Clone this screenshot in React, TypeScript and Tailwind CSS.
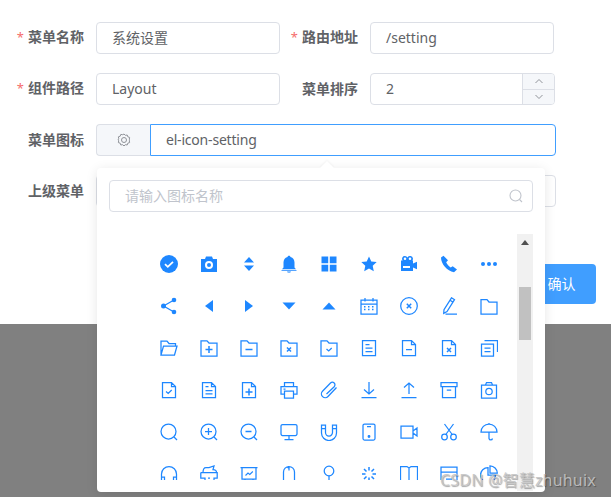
import type { ReactNode } from "react";

const Fill = ({ children }: { children: ReactNode }) => (
  <g fill="currentColor" stroke="none">
    {children}
  </g>
);

// el-icon-* in the order they are listed in the picker
const ICONS: ReactNode[] = [
  // row 1
  <Fill><circle cx="9" cy="9" r="9" /><path d="M5 9.2l2.8 2.6L13 6.8" fill="none" stroke="#fff" strokeWidth="1.8" /></Fill>,
  <Fill><path fillRule="evenodd" d="M1 4h4l1-2.5h6L13 4h4v13H1zM9 6a4 4 0 100 8 4 4 0 000-8zm0 2a2 2 0 110 4 2 2 0 010-4z" /></Fill>,
  <Fill><path d="M9 2l5 5.5H4zM9 16l-5-5.500h10z" /></Fill>,
  <Fill><path d="M9 .8c.8 0 1.300.5 1.500 1.200 2.700.7 4 3 4 5.500v5l1.500 1.800H2l1.500-1.800v-5c0-2.500 1.300-4.800 4-5.500C7.700 1.300 8.200.8 9 .8zM1.500 15h15v.8h-15zM7 16.500h4c-.3.800-1 1.200-2 1.200s-1.700-.4-2-1.200z" /></Fill>,
  <Fill><path d="M1.500 1.500h6.700v6.700H1.500zM9.800 1.500h6.700v6.700H9.800zM1.500 9.800h6.700v6.700H1.500zM9.800 9.800h6.700v6.700H9.800z" /></Fill>,
  <Fill><path d="M9 1.500l2.300 5 5.400.6-4 3.700 1.100 5.400L9 13.500l-4.800 2.700 1.100-5.400-4-3.700 5.400-.6z" /></Fill>,
  <Fill><path fillRule="evenodd" d="M5 1a2.800 2.800 0 012.500 1.500A3 3 0 0113 3.500c0 .9-.3 1.500-.8 2H13v3l4-1.800v7.600l-4-1.800V16H1V5.500h1.600A2.800 2.800 0 015 1zm0 1.500a1.300 1.300 0 100 2.600 1.300 1.300 0 000-2.600zm5 0a1.300 1.300 0 100 2.600 1.300 1.300 0 000-2.600zM3 11v2h7v-2z" /></Fill>,
  <Fill><path d="M3.500 .8L1 2.500C1 9 7 16 14 17.300l3-2.800-4.300-3.200-2 1.300C9 11.500 7 9.300 6.200 7.300l1.800-2z" /></Fill>,
  <Fill><circle cx="3" cy="9" r="2" /><circle cx="9" cy="9" r="2" /><circle cx="15" cy="9" r="2" /></Fill>,
  // row 2
  <Fill><circle cx="3.500" cy="9" r="2.500" /><circle cx="14" cy="3" r="2.300" /><circle cx="14" cy="15" r="2.300" /><path d="M3.500 9L14 3M3.500 9L14 15" stroke="currentColor" strokeWidth="1.300" /></Fill>,
  <Fill><path d="M13 3v12L5 9z" /></Fill>,
  <Fill><path d="M5 3v12L13 9z" /></Fill>,
  <Fill><path d="M2.500 5.500h13L9 12.500z" /></Fill>,
  <Fill><path d="M2.500 12.500h13L9 5.500z" /></Fill>,
  <><path d="M1 3h16v14H1zM1 7h16M5 1v3.500M13 1v3.500" /><path d="M4 9.700h1.500M8 9.700h1.500M12 9.700h1.500M4 12.500h1.500M8 12.500h1.500M12 12.500h1.500" strokeWidth="1.500" /></>,
  <><circle cx="9" cy="9" r="8.300" /><path d="M6.800 6.800l4.400 4.400M11.200 6.800l-4.400 4.400" strokeWidth="1.500" /></>,
  <path d="M11.500 .8l3 1.800-7.500 11.900-3.300 1.800.3-3.700zM10 3.300l3 1.800M5.500 17H17" />,
  <path d="M1 2.500h6l2 2.500h8v12H1z" />,
  // row 3
  <path d="M1 16V2h6l2 2.500h6.500V7M1 16l2.500-9H17l-2.500 9z" />,
  <><path d="M1 1.800h6l2 2.200h8v13H1z" /><path d="M5.500 10.500h7M9 7v7" strokeWidth="1.500" /></>,
  <><path d="M1 1.800h6l2 2.200h8v13H1z" /><path d="M5.500 10.500h7" strokeWidth="1.500" /></>,
  <><path d="M1 1.800h6l2 2.200h8v13H1z" /><path d="M7 8.500l4 4M11 8.500l-4 4" strokeWidth="1.500" /></>,
  <><path d="M1 1.800h6l2 2.200h8v13H1z" /><path d="M6.500 10l2.200 2 3-3" /></>,
  <path d="M2.500 1.500h13v15h-13zM5.500 5.500h4M5.500 9h7M5.500 12.500h7" />,
  <path d="M2.500 1.500h9l4 4v11h-13zM11.500 1.500v4h4M6 10.500h6" />,
  <><path d="M2.500 1.500h9l4 4v11h-13zM11.500 1.500v4h4" /><path d="M7 9l4 4M11 9l-4 4" strokeWidth="1.500" /></>,
  <path d="M1.500 5h12v12h-12zM4.500 1.500h13V13M4.500 9h6M4.500 12.500h6" />,
  // row 4
  <path d="M2.500 1.500h9l4 4v11h-13zM11.500 1.500v4h4M6 10.500l2.200 2 3.500-3.500" />,
  <path d="M2.500 1.500h9l4 4v11h-13zM11.500 1.500v4h4M5.500 5.500h3M5.500 9.500h7M5.500 12.800h7" />,
  <><path d="M2.500 1.500h9l4 4v11h-13zM11.500 1.500v4h4" /><path d="M5.500 11h7M9 7.500v7" strokeWidth="1.500" /></>,
  <path d="M4.500 5.500V1.500h9v4M4.500 13H1V5.500h16V13h-3.500M4.500 10h9v7h-9zM3.500 8h2" />,
  <path d="M16.500 6.500L8 15.500a3.800 3.800 0 01-5.500-5.300L10.500 2a2.600 2.600 0 013.700 3.700L6.500 13" />,
  <path d="M1.500 16.500h15M9 1v12M4 8.500l5 4.500 5-4.500" />,
  <path d="M1.500 16.500h15M9 13V2M4 6.500L9 2l5 4.500" />,
  <path d="M1 1.500h16v4H1zM2.500 5.500v11h13v-11M6.800 9h4.400" />,
  <><path d="M1.500 4h15v13h-15zM5.500 4l1-2.500h5l1 2.500" /><circle cx="9" cy="10.500" r="3.200" /></>,
  // row 5
  <><circle cx="8.500" cy="8.500" r="7.500" /><path d="M14 14l3 3" /></>,
  <><circle cx="8.500" cy="8.500" r="7.500" /><path d="M14 14l3 3M5 8.500h7M8.500 5v7" /></>,
  <><circle cx="8.500" cy="8.500" r="7.500" /><path d="M14 14l3 3M5.500 8.500h6" strokeWidth="1.300" /></>,
  <path d="M2.500 1.500h13a1.500 1.500 0 011.500 1.500v8a1.500 1.500 0 01-1.500 1.500h-13A1.500 1.500 0 011 11V3a1.500 1.500 0 011.500-1.500zM9 12.500v4M4.500 16.500h9" />,
  <path d="M1.500 2h4v7.500a3.500 3.500 0 007 0V2h4v8a7.500 7.500 0 01-15 0zM1.500 5.500h4M12.500 5.500h4" />,
  <><path d="M4.500 1h9a1.500 1.500 0 011.500 1.500v13a1.500 1.500 0 01-1.500 1.500h-9A1.500 1.500 0 013 15.500v-13A1.500 1.500 0 014.500 1zM7 3.500h4" /><circle cx="9" cy="13.500" r=".8" fill="currentColor" /></>,
  <path d="M1 3h12v12H1zM13 8l4-3v8l-4-3" />,
  <><circle cx="4.500" cy="14" r="2.800" /><circle cx="13.500" cy="14" r="2.800" /><path d="M5.800 11.500L13.500 1M12.200 11.500L4.500 1" /></>,
  <path d="M1 9a8 8 0 0116 0zM9 1V0M9 9v6.500a1.800 1.800 0 003.500 0" />,
  // row 6
  <path d="M1.500 18V9a7.500 7.500 0 0115 0v9M1.500 12h3v6M16.500 12h-3v6" />,
  <path d="M3 7.500c0-2.500 1-5 3-5h3l5-1.500-1 3.500c2 0 3.500 1 3.500 3M.8 7.500h16.400V13H14v5M.8 7.500V13H5v5M8 13h2" />,
  <><path d="M.5 2.500h17M2 2.500v11.500h14V2.500M5 14v2M13 14v2" /><path d="M5.500 10.500l2.500-2.500 1.800 1.500 3-3" strokeWidth="1.100" /></>,
  <path d="M3.500 18V7a5.500 5.500 0 0111 0v11M9 1.500v4M9 1.500L7.500 3" />,
  <><circle cx="9" cy="6" r="4.800" /><path d="M9 10.800V15.500M2 16h14" /></>,
  <path d="M9 2v3.500M9 12.500V16M2 9h3.500M12.500 9H16M4 4l2.500 2.500M11.500 11.500L14 14M14 4l-2.500 2.500M6.500 11.500L4 14" strokeWidth="1.500" />,
  <path d="M.5 18V1.500h6.500L9 3l2-1.500h6.500V18M9 3v15" />,
  <path d="M1 2h16v16H1zM1 7h16M6 14h6" />,
  <path d="M10 .8a7.500 7.500 0 017.300 7.300H10zM8 2.500a7.500 7.500 0 107.500 7.500H8z" />,
];

const inputBox = "h-[32px] rounded-[4px] border border-[#dcdfe6] bg-white flex items-center pb-[2px] text-[14px] text-[#606266]";

function Label({ text, required, width }: { text: string; required?: boolean; width: string }) {
  return (
    <label className={`${width} shrink-0 pb-[2px] pr-3 text-right text-[14px] font-bold text-[#606266]`}>
      {required && <span className="mr-[4px] text-[13px] font-normal text-[#f56c6c]">*</span>}
      {text}
    </label>
  );
}

export default function App() {
  return (
    <div
      className="relative h-[497px] w-[611px] overflow-hidden bg-[#808080]"
      style={{ fontFamily: '"Noto Sans", "Noto Sans CJK SC", sans-serif' }}
    >
      <div className="h-[324px] bg-white pt-[22px]">
        <div className="flex flex-col gap-[19px]">
          <div className="flex items-center">
            <Label text="菜单名称" required width="w-[96px]" />
            <div className={`${inputBox} w-[184px] pl-[15px]`}>系统设置</div>
            <Label text="路由地址" required width="w-[90px]" />
            <div className={`${inputBox} w-[184px] pl-[15px]`}>/setting</div>
          </div>
          <div className="flex items-center">
            <Label text="组件路径" required width="w-[96px]" />
            <div className={`${inputBox} w-[184px] pl-[15px]`}>Layout</div>
            <Label text="菜单排序" width="w-[90px]" />
            <div className="flex h-[32px] w-[185px] items-center overflow-hidden rounded-[4px] border border-[#dcdfe6] bg-white pl-[15px] text-[14px] text-[#606266]">
              <span className="flex-1 pb-[2px]">2</span>
              <div className="flex h-full w-[32px] flex-col border-l border-[#dcdfe6] bg-[#f5f7fa] text-[#909399]">
                <div className="flex flex-1 items-center justify-center border-b border-[#dcdfe6]">
                  <svg width="10" height="6" viewBox="0 0 10 6" fill="none" stroke="currentColor" strokeWidth="1">
                    <path d="M1.500 5L5 1.500 8.500 5" />
                  </svg>
                </div>
                <div className="flex flex-1 items-center justify-center">
                  <svg width="10" height="6" viewBox="0 0 10 6" fill="none" stroke="currentColor" strokeWidth="1">
                    <path d="M1.500 1L5 4.500 8.500 1" />
                  </svg>
                </div>
              </div>
            </div>
          </div>
          <div className="flex items-center">
            <Label text="菜单图标" width="w-[96px]" />
            <div className="flex h-[32px] w-[54px] items-center justify-center rounded-l-[4px] border border-r-0 border-[#dcdfe6] bg-[#f5f7fa] text-[#909399]">
              <svg width="14" height="14" viewBox="0 0 14 14" fill="none" stroke="currentColor" strokeWidth="1">
                <path d="M7 1l1.300 1.300 1.900-.3.600 1.800 1.800.6-.3 1.900L13 7l-.7.700.3 1.900-1.800.6-.6 1.800-1.900-.3L7 13l-1.300-1.300-1.900.3-.6-1.800-1.800-.6.3-1.900L1 7l.7-1.300-.3-1.900 1.800-.6.6-1.800 1.900.3z" />
                <circle cx="7" cy="7" r="2.500" />
              </svg>
            </div>
            <div className="flex h-[32px] w-[406px] items-center rounded-r-[4px] border border-[#409eff] bg-white pb-[2px] pl-[15px] text-[14px] tracking-[-0.2px] text-[#606266]">
              el-icon-setting
            </div>
          </div>
          <div className="flex items-center">
            <Label text="上级菜单" width="w-[96px]" />
            <div className={`${inputBox} w-[460px]`} />
          </div>
        </div>
        <div className="mt-[57px] flex justify-end pr-[15px]">
          <button className="h-[40px] w-[69px] rounded-[4px] bg-[#409eff] pb-[2px] text-[14px] text-white">确认</button>
        </div>
      </div>

      {/* icon picker popover */}
      <div className="absolute left-[97px] top-[168px] h-[324px] w-[448px] rounded-[4px] bg-white shadow-[0_2px_12px_0_rgba(0,0,0,0.1)]">
        <div className="absolute left-[225px] top-[-5px] h-[10px] w-[10px] rotate-45 bg-white shadow-[-1px_-1px_2px_rgba(0,0,0,0.04)]" />
        <div className="relative px-3 pt-3">
          <div className="flex h-[32px] items-center justify-between rounded-[4px] border border-[#dcdfe6] bg-white pl-[15px] pr-[9px] text-[14px] text-[#c0c4cc]">
            <span className="pb-[2px]">请输入图标名称</span>
            <svg width="14" height="14" viewBox="0 0 14 14" fill="none" stroke="currentColor" strokeWidth="1.100">
              <circle cx="6.500" cy="6.500" r="5.500" />
              <path d="M10.500 10.500L13 13" />
            </svg>
          </div>
          <div className="mt-[22px] flex items-start">
            <div className="h-[246px] w-[408px] overflow-hidden pl-[40px] pt-[9px]">
              <div className="grid grid-cols-[repeat(9,40px)] auto-rows-[42px] text-[#1e87ff]">
                {ICONS.map((icon, i) => (
                  <div key={i} className="flex items-center justify-center">
                    <svg width="18" height="18" viewBox="0 0 18 18" fill="none" stroke="currentColor" strokeWidth="1.250">
                      {icon}
                    </svg>
                  </div>
                ))}
              </div>
            </div>
            <div className="flex h-[257px] w-[16px] flex-col items-center bg-[#f1f1f1]">
              <div className="mt-[6px] h-0 w-0 border-x-[4px] border-b-[5px] border-x-transparent border-b-[#505050]" />
              <div className="mt-[42px] h-[53px] w-[12px] bg-[#c1c1c1]" />
            </div>
          </div>
        </div>
      </div>

      {/* watermark */}
      <div className="absolute left-[440px] top-[469px] text-[16px] leading-[22px] tracking-[0.2px] text-[#c4c4c4]/90 [text-shadow:1px_1px_1px_rgba(0,0,0,0.35)]">
        CSDN @智慧zhuhuix
      </div>
    </div>
  );
}
